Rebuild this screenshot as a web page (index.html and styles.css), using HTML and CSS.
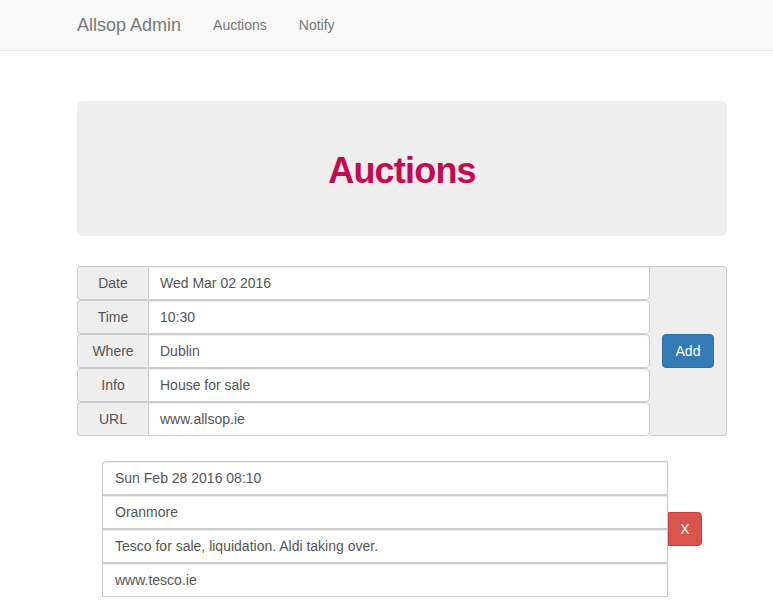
FILE: index.html
```html
<!DOCTYPE html>
<html>
<head>
<meta charset="utf-8">
<link rel="stylesheet" href="styles.css">
</head>
<body>
<nav class="navbar">
  <div class="nav-inner">
    <span class="brand">Allsop Admin</span>
    <span class="nav-link">Auctions</span>
    <span class="nav-link">Notify</span>
  </div>
</nav>
<main class="container">
  <div class="jumbotron"><h1>Auctions</h1></div>

  <div class="add-form">
    <div class="rows">
      <div class="row"><span class="addon">Date</span><span class="field">Wed Mar 02 2016</span></div>
      <div class="row"><span class="addon">Time</span><span class="field">10:30</span></div>
      <div class="row"><span class="addon">Where</span><span class="field">Dublin</span></div>
      <div class="row"><span class="addon">Info</span><span class="field">House for sale</span></div>
      <div class="row"><span class="addon">URL</span><span class="field">www.allsop.ie</span></div>
    </div>
    <div class="add-cell"><button class="btn btn-primary">Add</button></div>
  </div>

  <div class="item">
    <div class="item-rows">
      <div class="item-row first">Sun Feb 28 2016 08:10</div>
      <div class="item-row">Oranmore</div>
      <div class="item-row">Tesco for sale, liquidation. Aldi taking over.</div>
      <div class="item-row">www.tesco.ie</div>
    </div>
    <button class="btn btn-danger">X</button>
  </div>
</main>
</body>
</html>
```
FILE: styles.css
```css
* { box-sizing: border-box; }
html, body { margin: 0; padding: 0; }
body {
  font-family: "Liberation Sans", Arial, sans-serif;
  font-size: 14px;
  color: #333;
  background: #fff;
}
.navbar {
  height: 51px;
  background: #f8f8f8;
  border-bottom: 1px solid #e7e7e7;
}
.nav-inner {
  display: flex;
  align-items: center;
  height: 50px;
  padding-left: 77px;
}
.brand {
  font-size: 18px;
  color: #777;
  padding-right: 32px;
}
.nav-link {
  color: #777;
  padding-right: 32px;
}
.container {
  width: 650px;
  margin-left: 77px;
  padding-top: 50px;
}
.jumbotron {
  height: 135px;
  background: #eee;
  border-radius: 6px;
  display: flex;
  align-items: center;
  justify-content: center;
}
.jumbotron h1 {
  margin: 4px 0 0;
  font-size: 36px;
  font-weight: bold;
  letter-spacing: -0.8px;
  color: #c5084f;
}
.add-form {
  display: flex;
  margin-top: 30px;
}
.rows {
  width: 573px;
  display: flex;
  flex-direction: column;
}
.row {
  display: flex;
  height: 34px;
}
.addon {
  width: 71px;
  background: #eee;
  border: 1px solid #ccc;
  border-right: 0;
  border-radius: 4px 0 0 4px;
  color: #555;
  display: flex;
  align-items: center;
  justify-content: center;
}
.field {
  flex: 1;
  border: 1px solid #ccc;
  border-radius: 0 4px 4px 0;
  box-shadow: inset 0 1px 1px rgba(0,0,0,.075);
  color: #555;
  padding: 0 11px;
  display: flex;
  align-items: center;
}
.row:first-child .field { border-top-right-radius: 0; }
.add-cell {
  width: 77px;
  background: #eee;
  border: 1px solid #ccc;
  border-left: 0;
  border-radius: 0 4px 4px 0;
  display: flex;
  align-items: center;
  justify-content: center;
}
.btn {
  font-family: inherit;
  font-size: 14px;
  color: #fff;
  height: 34px;
  border: 1px solid transparent;
  padding: 0 12px;
  cursor: pointer;
}
.btn-primary {
  width: 52px;
  background: #337ab7;
  border-color: #2e6da4;
  border-radius: 4px;
}
.btn-danger {
  width: 34px;
  background: #d9534f;
  border-color: #d43f3a;
  border-radius: 0 4px 4px 0;
  padding: 0;
}
.item {
  display: flex;
  align-items: center;
  margin-top: 25px;
  margin-left: 25px;
}
.item-rows {
  width: 566px;
  display: flex;
  flex-direction: column;
}
.item-row {
  height: 34px;
  border: 1px solid #ccc;
  box-shadow: inset 0 1px 1px rgba(0,0,0,.075);
  color: #555;
  padding: 0 12px;
  display: flex;
  align-items: center;
}
.item-row.first { border-top-left-radius: 4px; }
```
